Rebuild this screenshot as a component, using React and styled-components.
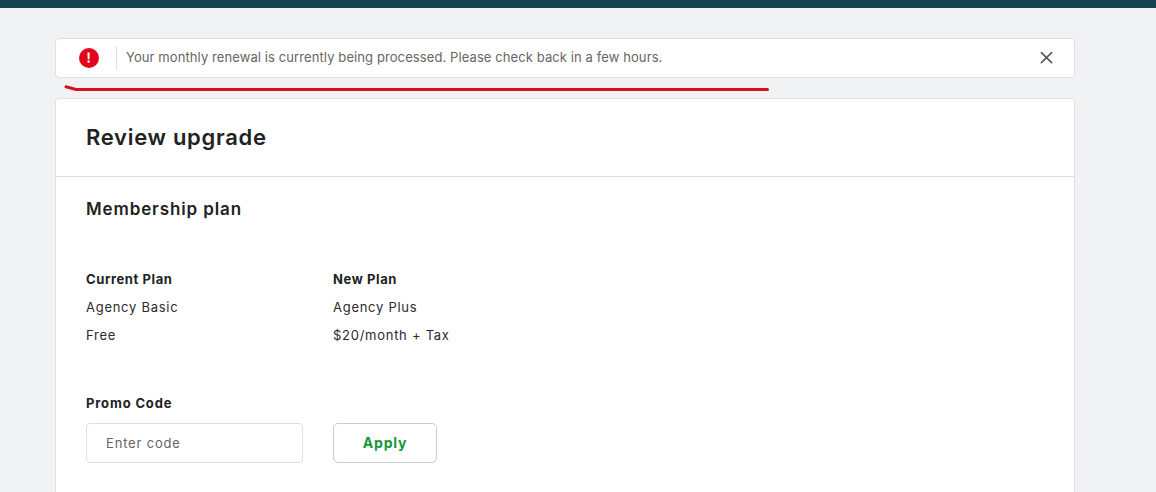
import React, { useState } from 'react';
import styled, { createGlobalStyle } from 'styled-components';

const GlobalStyle = createGlobalStyle`
  * {
    box-sizing: border-box;
  }

  body {
    margin: 0;
    background-color: #f1f2f4;
    color: #222222;
    font-family: Inter, "Liberation Sans", sans-serif;
    overflow: hidden;
  }
`;

const Page = styled.div`
  height: 100vh;
  display: flex;
  flex-direction: column;
  overflow: hidden;
`;

const TopBar = styled.div`
  flex: none;
  height: 8px;
  background-color: #164354;
`;

const Container = styled.main`
  position: relative;
  flex: 1;
  display: flex;
  flex-direction: column;
  gap: 20px;
  width: 1020px;
  margin-left: 55px;
  padding-top: 30px;
`;

const Alert = styled.div`
  flex: none;
  display: flex;
  align-items: center;
  height: 40px;
  padding: 0 20px 0 23px;
  background-color: white;
  border: 1px solid #e0e0e0;
  border-radius: 4px;
`;

const AlertMessage = styled.p`
  flex: 1;
  height: 24px;
  margin: 0 0 0 17px;
  padding-left: 9px;
  border-left: 1px solid #e0e0e0;
  color: #656565;
  font-size: 13px;
  line-height: 23px;
  letter-spacing: 0.095px;
`;

const CloseButton = styled.button`
  display: flex;
  padding: 0;
  background: none;
  border: none;
  color: #5a5a5a;
  cursor: pointer;
`;

/* Hand drawn line under the alert */
const Marker = styled.svg`
  position: absolute;
  top: 75px;
  left: 7px;
`;

const Card = styled.section`
  flex: 1;
  background-color: white;
  border: 1px solid #e0e0e0;
  border-bottom: none;
  border-radius: 4px 4px 0 0;
`;

const CardHeader = styled.header`
  height: 78px;
  padding: 23px 30px 0;
  border-bottom: 1px solid #e0e0e0;
`;

const Title = styled.h1`
  margin: 0;
  font-size: 22px;
  font-weight: 600;
  line-height: 30px;
  letter-spacing: 0.7px;
`;

const CardBody = styled.div`
  padding: 20px 30px;
`;

const Subtitle = styled.h2`
  margin: 0 0 44px;
  font-size: 17px;
  font-weight: 600;
  line-height: 24px;
  letter-spacing: 0.88px;
`;

const Plans = styled.div`
  display: grid;
  grid-template-columns: 217px 217px;
  column-gap: 30px;
  margin-bottom: 40px;
`;

const Plan = styled.div`
  color: #2b2b2b;
  font-size: 13px;
  line-height: 28px;
  letter-spacing: 0.73px;
`;

const Label = styled.div`
  color: #222222;
  font-size: 13px;
  font-weight: 700;
  line-height: 28px;
  letter-spacing: ${(props) => (props.$wide ? '0.85px' : '0.6px')};
`;

const PromoRow = styled.div`
  display: flex;
  gap: 30px;
  margin-top: 6px;
`;

const PromoInput = styled.input`
  width: 217px;
  height: 40px;
  padding: 0 19px;
  border: 1px solid #e0e0e0;
  border-radius: 4px;
  background-color: white;
  font-family: inherit;
  font-size: 13px;
  letter-spacing: 0.82px;

  &::placeholder {
    color: #656565;
    opacity: 1;
  }
`;

const ApplyButton = styled.button`
  width: 104px;
  height: 40px;
  padding: 0 0 2px;
  border: 1px solid #cccccc;
  border-radius: 5px;
  background-color: white;
  color: #14993c;
  font-family: inherit;
  font-size: 14px;
  font-weight: 700;
  letter-spacing: 0.8px;
  cursor: pointer;
`;

const ErrorIcon = () => (
  <svg width="20" height="20" viewBox="0 0 20 20">
    <circle cx="10" cy="10" r="10" fill="#e2061a" />
    <path d="M8.4 4.6h2.4l-.4 6.8H8.8z" fill="#fff" />
    <circle cx="9.6" cy="13.6" r="1.2" fill="#fff" />
  </svg>
);

const CloseIcon = () => (
  <svg width="16" height="16" viewBox="0 0 16 16">
    <path d="M3.4 2.7l10.2 10M13.6 2.7L3.4 12.7" fill="none" stroke="currentColor" strokeWidth="1.7" strokeLinecap="round" />
  </svg>
);

const App = () => {
  const [code, setCode] = useState('');
  const [showAlert, setShowAlert] = useState(true);

  return (
    <>
      <GlobalStyle />
      <Page>
        <TopBar />
        <Container>
          {showAlert && (
            <Alert role="alert">
              <ErrorIcon />
              <AlertMessage>
                Your monthly renewal is currently being processed. Please check back in a few hours.
              </AlertMessage>
              <CloseButton aria-label="Close" onClick={() => setShowAlert(false)}>
                <CloseIcon />
              </CloseButton>
            </Alert>
          )}
          <Card>
            <CardHeader>
              <Title>Review upgrade</Title>
            </CardHeader>
            <CardBody>
              <Subtitle>Membership plan</Subtitle>
              <Plans>
                <Plan>
                  <Label>Current Plan</Label>
                  <div>Agency Basic</div>
                  <div>Free</div>
                </Plan>
                <Plan>
                  <Label>New Plan</Label>
                  <div>Agency Plus</div>
                  <div>$20/month + Tax</div>
                </Plan>
              </Plans>
              <Label as="label" htmlFor="promo" $wide>Promo Code</Label>
              <PromoRow>
                <PromoInput
                  id="promo"
                  placeholder="Enter code"
                  value={code}
                  onChange={(e) => setCode(e.target.value)}
                />
                <ApplyButton>Apply</ApplyButton>
              </PromoRow>
            </CardBody>
          </Card>
          <Marker width="710" height="12" viewBox="0 0 710 12">
            <path d="M4 3.8L14 6.5H705.5" fill="none" stroke="#d5131b" strokeWidth="3" strokeLinecap="round" strokeLinejoin="round" />
          </Marker>
        </Container>
      </Page>
    </>
  );
};

export default App;
